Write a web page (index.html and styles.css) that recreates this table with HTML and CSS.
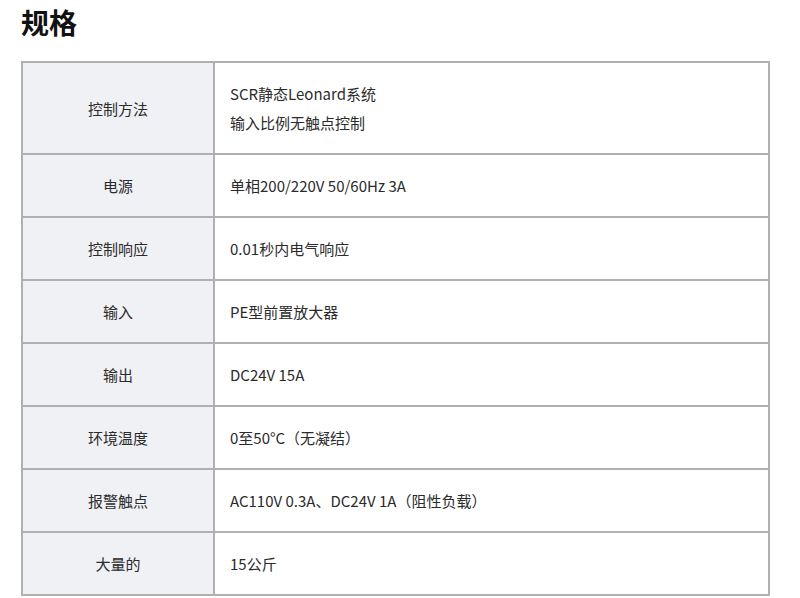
FILE: index.html
```html
<!DOCTYPE html>
<html lang="zh">
<head>
<meta charset="utf-8">
<link rel="stylesheet" href="styles.css">
</head>
<body>
<h2 class="title">规格</h2>
<table class="spec">
  <colgroup><col class="c1"><col class="c2"></colgroup>
  <tr><th>控制方法</th><td>SCR静态Leonard系统<br>输入比例无触点控制</td></tr>
  <tr><th>电源</th><td>单相200/220V 50/60Hz 3A</td></tr>
  <tr><th>控制响应</th><td>0.01秒内电气响应</td></tr>
  <tr><th>输入</th><td>PE型前置放大器</td></tr>
  <tr><th>输出</th><td>DC24V 15A</td></tr>
  <tr><th>环境温度</th><td>0至50°C（无凝结）</td></tr>
  <tr><th>报警触点</th><td>AC110V 0.3A、DC24V 1A（阻性负载）</td></tr>
  <tr><th>大量的</th><td>15公斤</td></tr>
</table>
</body>
</html>
```
FILE: styles.css
```css
html, body { margin: 0; padding: 0; background: #fff; }
body {
  font-family: "Noto Sans CJK SC", "Noto Sans", sans-serif;
  color: #333;
  padding: 0 20px 0 21px;
}
.title {
  margin: 0;
  padding-top: 2px;
  font-size: 28px;
  line-height: 40px;
  font-weight: 700;
  color: #111;
  height: 59px;
}
.spec {
  border-collapse: collapse;
  width: 749px;
  font-size: 15px;
}
.c1 { width: 192px; }
.spec th, .spec td {
  border: 2px solid #b0b0b0;
  line-height: 29px;
  padding: 16px 15px 16px 15px;
  height: 29px;
  font-weight: 400;
  color: #2b2b2b;
  vertical-align: middle;
}
.spec th {
  background: #f0f1f5;
  text-align: center;
}
.spec td { text-align: left; background: #fff; }
```
